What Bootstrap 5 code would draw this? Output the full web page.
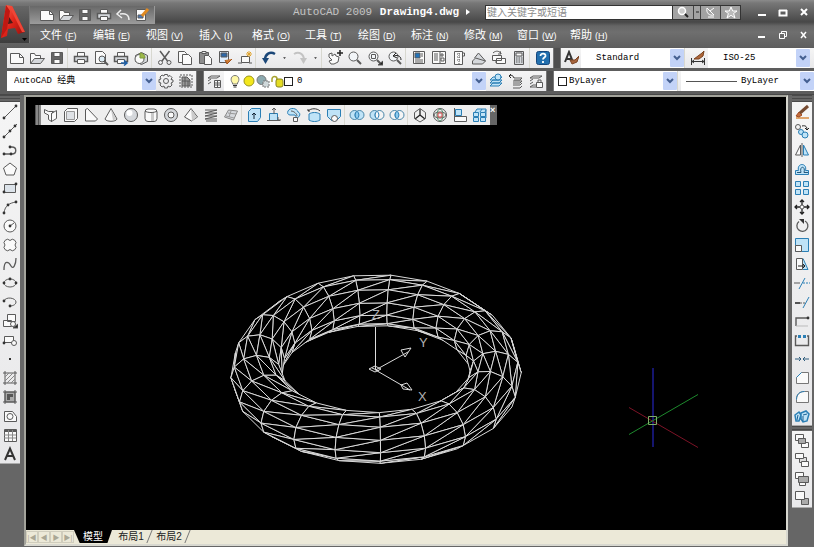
<!DOCTYPE html>
<html lang="zh-CN">
<head>
<meta charset="utf-8">
<meta name="viewport" content="width=device-width, initial-scale=1">
<title>AutoCAD 2009 Drawing4.dwg</title>
<link rel="stylesheet" href="https://cdn.jsdelivr.net/npm/bootstrap@5.3.0/dist/css/bootstrap.min.css">
<style>
  body { background: #666; font-family: "Liberation Sans", "Noto Sans CJK SC", sans-serif; font-size: 11px; line-height: 14px; color: #000; }
  button { border: 0; padding: 0; background: none; color: inherit; }
  svg { display: block; }
  .app-head { background: linear-gradient(#8b8b8b, #777 3px, #484848 22px, #666 26px, #6f6f6f 32px, #5f5f5f); height: 47px; color: #fff; }
  .logo-btn { width: 30px; height: 37px; margin-top: 6px; background: linear-gradient(#666, #3e3e3e); border-right: 1px solid #777; }
  .title-row { height: 24px; }
  .quick-bar { background: linear-gradient(#686868, #9c9c9c); height: 18px; margin-top: 6px; padding: 0 3px 0 7px; border-right: 1px solid #999; }
  .quick-bar .tool { width: 19px; height: 18px; }
  .doc-title { font-family: "Liberation Mono", monospace; font-size: 11px; color: #c4c4c4; width: 192px; margin-left: 138px; }
  .doc-title strong { color: #fff; margin-left: 1px; }
  .search-box { width: 188px; height: 15px; border: 1px solid #333; border-radius: 0; padding: 0 1px; font-size: 10px; line-height: 13px; color: #333; background: #fff; outline: 0; }
  .search-box::placeholder { color: #8c8c8c; opacity: 1; }
  .info-btns { background: #a2a2a2; height: 15px; border: 1px solid #333; border-left: 0; }
  .info-btns button + button { border-left: 1px solid #444; }
  .info-btns svg { margin: 0 auto; }
  .w20 { width: 20px; } .w7 { width: 7px; }
  .win-btns button { width: 21px; height: 16px; }
  .win-btns svg { margin: auto; }
  .menu-row { padding: 3px 0 0 10px; }
  .menu-row a { width: 53px; flex: none; color: #fff; text-decoration: none; font-size: 11px; white-space: nowrap; }
  .menu-row small { font-size: 9px; }
  .tool-row { height: 20px; margin-bottom: 3px; }
  .rows { background: #5d5d5d; padding: 1px 0 0 7px; border-bottom: 1px solid #484848; }
  .strip { background: linear-gradient(#f5f5f5, #e8e8ea); height: 20px; flex: none; }
  .tool { width: 20px; height: 20px; display: flex; align-items: center; justify-content: center; flex: none; }
  .tool svg { width: 16px; height: 16px; fill: none; stroke: #5a5a5a; stroke-width: 1; }
  .tool.dot { width: 11px; }
  .sep { width: 4px; height: 100%; border-left: 1px solid #d8d8d0; flex: none; }
  .float-bar .sep { width: 3px; }
  .combo { appearance: none; border: 0; border-radius: 0; height: 20px; padding: 0 16px 0 7px; font-family: "Liberation Mono", "Noto Sans CJK SC", monospace; font-size: 9px; color: #000; background: #fff url("data:image/svg+xml,%3Csvg xmlns='http://www.w3.org/2000/svg' width='14' height='18'%3E%3Crect width='14' height='18' rx='1' fill='%23c3d3f8'/%3E%3Cpath d='M4 7l3 3 3-3' fill='none' stroke='%23445f91' stroke-width='2'/%3E%3C/svg%3E") no-repeat right 0 center; min-width: 0; }
  .white-box { background: #fff; }
  .gap-dark { width: 8px; background: #4f4f4f; height: 20px; border-left: 1px solid #777; border-right: 1px solid #777; flex: none; }
  .c-work { width: 149px; } .c-layer { width: 193px; padding-left: 4px; } .c-std { width: 103px; padding-left: 15px; } .c-dim { width: 102px; padding-left: 15px; } .c-color { width: 110px; padding-left: 2px; }
  .swatch { width: 9px; height: 9px; border: 1px solid #222; background: #fff; flex: none; }
  .layer-icons svg { width: 14px; height: 14px; fill: none; stroke: #777; }
  .line-sample { width: 51px; height: 1px; background: #555; margin-left: 5px; flex: none; }
  .c-line { padding-left: 4px; }
  .side { width: 20px; flex: none; }
  .side-right { margin-right: 2px; }
  .side .tool { height: 19px; }
  .side .strip { height: auto; border-bottom: 1px solid #aaa; }
  .side-grip { height: 7px; background: repeating-linear-gradient(#4a4a4a 0 1px, #666 1px 3px); }
  .strip + .side-grip { height: 5px; }
  .work-area { min-height: 0; }
  .work-frame { border: 2px solid #a3a39b; border-right-color: #d8d8d0; border-bottom-color: #d8d8d0; margin: 0 4px 1px 4px; min-width: 0; }
  .draw-area { background: #000; position: relative; overflow: hidden; min-height: 0; }
  .draw-area > svg { position: absolute; inset: 0; width: 100%; height: 100%; }
  .float-bar { position: absolute; left: 9px; top: 8px; height: 20px; background: #eee; }
  .float-grip { width: 6px; background: repeating-linear-gradient(90deg, #555 0 1px, #888 1px 3px); }
  .float-close { width: 7px; background: #666; color: #fff; font-size: 9px; font-weight: bold; line-height: 10px; }
  .tab-row { background: #ece9d8; height: 14px; font-size: 10px; }
  .page-btn { width: 12px; height: 12px; margin: 1px 0; border: 1px solid #d0cdbd; color: #aaa795; font-size: 7px; line-height: 9px; }
  .sheet-tab { height: 13px; line-height: 13px; width: 38px; color: #222; position: relative; }
  .sheet-tab::after { content: ""; position: absolute; right: 0; top: 0; height: 13px; border-left: 1px solid #777; transform: skewX(-22deg); }
  .sheet-tab.current { background: #000; color: #fff; clip-path: polygon(0 0, 100% 0, 88% 100%, 15% 100%); }
</style>
</head>
<body>
<div class="d-flex flex-column vh-100 overflow-hidden">
  <header class="app-head d-flex flex-shrink-0">
    <button class="logo-btn flex-shrink-0" aria-label="AutoCAD">
      <svg width="29" height="37" viewBox="0 6 29 37" overflow="visible">
        <defs><linearGradient id="red" x2="1" y2="1"><stop stop-color="#ff6a50"/><stop offset=".5" stop-color="#e0241a"/><stop offset="1" stop-color="#8d0d0b"/></linearGradient></defs>
        <path d="M6 5L12 6 25 32 18 34 15 28 8 29 7 36 1 38Z" fill="url(#red)"/>
        <path d="M9 17L13 23 8 24Z" fill="#4a1a18"/><path d="M6 5L10 11 7 29 1 38Z" fill="#c01812"/><path d="M10 8L12 6 25 32 22 32Z" fill="#ef4637"/>
        <path d="M22 38h5l-2.500 3z" fill="#000"/>
      </svg>
    </button>
    <div class="flex-grow-1">
      <div class="title-row d-flex align-items-center">
        <div class="quick-bar d-flex align-self-start" data-tools="qnew qopen qsave qprint qundo qedit"></div>
        <div class="doc-title text-nowrap">AutoCAD 2009 <strong>Drawing4.dwg</strong> <svg class="d-inline" width="5" height="7"><path d="M0 0l4 3-4 3z" fill="#fff"/></svg></div>
        <input class="search-box" type="text" aria-label="搜索" placeholder="键入关键字或短语">
        <div class="info-btns d-flex">
          <button class="w20" aria-label="搜索"><svg width="14" height="13"><circle cx="6" cy="5" r="3.500" fill="#ccc" stroke="#fff" stroke-width="1.500"/><path d="M9 8l3 3" stroke="#222" stroke-width="2"/></svg></button>
          <button class="w7" aria-label="选项"><svg width="5" height="13"><path d="M1 6h3" stroke="#222"/></svg></button>
          <button class="w20" aria-label="通讯中心"><svg width="14" height="13" fill="none" stroke="#fff"><path d="M3 2l7 7M3 2c-1 5 2 8 7 7M6 5l4-3M4 11h6"/></svg></button>
          <button class="w20" aria-label="收藏夹"><svg width="14" height="13"><path d="M7 1l1.700 4H13L9.600 7.500 11 12 7 9.300 3 12l1.400-4.500L1 5h4.300z" fill="#bbb" stroke="#fff"/></svg></button>
        </div>
        <div class="win-btns d-flex ms-auto">
          <button aria-label="最小化"><svg width="10" height="10"><path d="M1 8h8" stroke="#fff" stroke-width="2"/></svg></button>
          <button aria-label="最大化"><svg width="10" height="10"><path d="M1 3.500h8M1.500 3v5.500h7V3" fill="none" stroke="#fff" stroke-width="2"/></svg></button>
          <button aria-label="关闭"><svg width="10" height="10"><path d="M2 2l6 6M8 2l-6 6" stroke="#fff" stroke-width="2"/></svg></button>
        </div>
      </div>
      <nav class="menu-row d-flex align-items-center" aria-label="菜单">
        <a href="#">文件 <small>(<u>F</u>)</small></a><a href="#">编辑 <small>(<u>E</u>)</small></a><a href="#">视图 <small>(<u>V</u>)</small></a><a href="#">插入 <small>(<u>I</u>)</small></a><a href="#">格式 <small>(<u>O</u>)</small></a><a href="#">工具 <small>(<u>T</u>)</small></a><a href="#">绘图 <small>(<u>D</u>)</small></a><a href="#">标注 <small>(<u>N</u>)</small></a><a href="#">修改 <small>(<u>M</u>)</small></a><a href="#">窗口 <small>(<u>W</u>)</small></a><a href="#">帮助 <small>(<u>H</u>)</small></a>
        <div class="win-btns d-flex ms-auto">
          <button aria-label="最小化文档"><svg width="10" height="10"><path d="M1 7h7" stroke="#fff" stroke-width="2"/></svg></button>
          <button aria-label="还原文档"><svg width="10" height="10"><path d="M1.500 3.500h5v5h-5zM3.500 3V1.500h5v5H7" fill="none" stroke="#fff"/></svg></button>
          <button aria-label="关闭文档"><svg width="10" height="10"><path d="M2 2l5 6M7 2L2 8" stroke="#fff" stroke-width="1.500"/></svg></button>
        </div>
      </nav>
    </div>
  </header>

  <div class="rows">
    <div class="tool-row d-flex overflow-hidden">
      <div class="strip d-flex" data-tools="new open save | print preview publish dwf | cut copy paste match block | undo dot redo dot | pan zoom zoomwin zoomprev | props center palette sheet markup calc | help"></div>
      <div class="gap-dark"></div>
      <div class="strip d-flex flex-grow-1">
        <div class="d-flex" data-tools="textstyle"></div>
        <select class="combo c-std" aria-label="文字样式"><option>Standard</option></select>
        <div class="sep"></div>
        <div class="d-flex" data-tools="dimstyle"></div>
        <select class="combo c-dim" aria-label="标注样式"><option>ISO-25</option></select>
      </div>
    </div>
    <div class="tool-row d-flex overflow-hidden">
      <div class="strip d-flex">
        <select class="combo c-work" aria-label="工作空间"><option>AutoCAD 经典</option></select>
        <div class="d-flex" data-tools="gear wsave"></div>
      </div>
      <div class="gap-dark"></div>
      <div class="strip d-flex">
        <div class="d-flex" data-tools="layers"></div>
        <div class="white-box d-flex align-items-center layer-icons ps-1">
          <svg viewBox="0 0 14 14"><path d="M4.500 9C2 6 3 1.500 7 1.500S12 6 9.500 9v1h-5z" fill="#fff9a8"/><path d="M5 11.500h4M5.500 13h3" stroke="#333"/></svg>
          <svg viewBox="0 0 14 14"><circle cx="7" cy="7" r="5" fill="#f3e71c" stroke="#9a951c"/></svg>
          <svg viewBox="0 0 14 14"><circle cx="5.500" cy="6" r="4.500" fill="#8caab0"/><path d="M7 7h6v6H7z" fill="#cfd8da" stroke-dasharray="2 1"/></svg>
          <svg viewBox="0 0 14 14"><path d="M2 8V5a2.500 2.500 0 015 0v3" stroke="#a7a331" stroke-width="1.500"/><rect x="6" y="5" width="7" height="8" rx="2" fill="#e4dc22" stroke="#888420"/></svg>
          <span class="swatch"></span>
          <select class="combo c-layer" aria-label="图层"><option>0</option></select>
        </div>
        <div class="d-flex" data-tools="laymake layprev laystate"></div>
      </div>
      <div class="gap-dark"></div>
      <div class="strip d-flex flex-grow-1">
        <div class="white-box d-flex align-items-center ps-1"><span class="swatch"></span><select class="combo c-color" aria-label="颜色"><option>ByLayer</option></select></div>
        <div class="sep"></div>
        <div class="white-box d-flex align-items-center flex-grow-1"><span class="line-sample"></span><select class="combo c-line flex-grow-1" aria-label="线型"><option>ByLayer</option></select></div>
      </div>
    </div>
  </div>

  <main class="work-area d-flex flex-grow-1 overflow-hidden">
    <aside class="side">
      <div class="side-grip"></div>
      <div class="strip d-flex flex-column" data-tools="line xline pline polygon rect arc circle cloud spline ellipse earc insert mkblock point hatch gradient region table mtext"></div>
    </aside>
    <section class="work-frame d-flex flex-column flex-grow-1">
      <div class="draw-area flex-grow-1">
        <svg id="model" fill="#000" stroke="#dadada" aria-label="圆环体线框">
          <g id="mesh" stroke-linejoin="bevel"></g>
          <g fill="none" stroke="#ddd">
            <path d="M349.500 273V230M349.500 273L382 255M349.500 273L384 293M343 272l6-3 6 3-6 3zM346 271l7 3M375 253l10-2-6 9-3-5zM375 288l6-2 5 7-9-1z"/>
          </g>
          <g fill="#b0b0b0" stroke="none" font-family="Liberation Sans, sans-serif" font-size="13"><text x="346" y="222">Z</text><text x="393" y="250">Y</text><text x="392" y="304">X</text></g>
          <path d="M627 271v79" stroke="#15156e" stroke-width="2"/>
          <path d="M603 310.500L672 350.500" stroke="#7c1326"/><path d="M603 337.500L672 297.500" stroke="#1d8a2d"/>
          <path d="M622.500 319.500h8v8h-8z" fill="none" stroke="#7fae68"/>
        </svg>
        <div class="float-bar d-flex">
          <div class="float-grip"></div>
          <div class="d-flex" data-tools="polysolid box wedge cone sphere cylinder torus pyramid helix planar | extrude presspull sweep revolve loft | union subtract intersect | move3d rotate3d align3d array3d"></div>
          <button class="float-close d-flex" aria-label="关闭工具栏">×</button>
        </div>
      </div>
      <div class="tab-row d-flex" role="tablist">
        <button class="page-btn" aria-label="第一个">|◀</button><button class="page-btn" aria-label="上一个">◀</button><button class="page-btn" aria-label="下一个">▶</button><button class="page-btn" aria-label="最后一个">▶|</button>
        <button class="sheet-tab current" role="tab">模型</button><button class="sheet-tab" role="tab">布局1</button><button class="sheet-tab" role="tab">布局2</button>
      </div>
    </section>
    <aside class="side side-right">
      <div class="side-grip"></div>
      <div class="strip d-flex flex-column" data-tools="erase copyobj mirror offset array move rotate scale stretch trim extend breakpt break join chamfer fillet explode"></div>
      <div class="side-grip"></div>
      <div class="strip d-flex flex-column" data-tools="order1 order2 order3 order4"></div>
    </aside>
  </main>
</div>

<script src="https://cdn.jsdelivr.net/npm/bootstrap@5.3.0/dist/js/bootstrap.bundle.min.js"></script>
<script>
const B = 'fill="#bfe3f7" stroke="#2b7fb5"', D = 'fill="#333" stroke="none"', W = 'fill="#fafafa"', G = 'fill="#d5d8dc"';
const page = `<path ${W} d="M1.500 3.500h9l4 4v6h-13z"/><path d="M10.500 3.500v4h4"/>`;
const folder = `<path ${W} d="M1.500 13.500v-10h4l1 2h5v3"/><path ${G} d="M1.500 13.500l4-5h10l-4 5z"/>`;
const floppy = `<path fill="#666" d="M2.500 2.500h11v11h-11z"/><path ${W} d="M5 2.500h6v4H5zM5 9.500h6v4H5z"/>`;
const printer = `<path ${W} d="M4.500 6.500v-4h7v4"/><path ${G} stroke-width="1.500" d="M1.500 6.500h13v5h-13z"/><path ${W} d="M4.500 9.500h7v4h-7z"/>`;
const lens = '<circle cx="6.500" cy="6.500" r="4.500" fill="#f2f5f8"/><path d="M10 10l4 4" stroke-width="2"/>';
const sheets = '<path d="M2 5l3-2h9l-3 2zM2 8l3-2M2 11l3-2M2 14l3-2h5l-2 2z"/>';
const rings = (l, m, r) => `<circle cx="5.500" cy="8" r="4.500" fill="${l}" stroke="#4a86a8"/><circle cx="10.500" cy="8" r="4.500" fill="${r}" stroke="#4a86a8"/><path d="M8 4.300a4.500 4.500 0 010 7.400 4.500 4.500 0 010-7.400z" fill="${m}" stroke="#2b7fb5"/>`;
const nodes = (...p) => p.map(([x, y]) => `<circle cx="${x}" cy="${y}" r="1.400" ${D}/>`).join('');
const icons = {
  qnew: page, qopen: folder, qsave: floppy, qprint: printer,
  qundo: '<path d="M14 13c0-5-3-7-9-6M6 3L2 7l5 4" stroke="#eee" stroke-width="1.500"/>',
  qedit: `<path ${W} d="M2.500 2.500h9v11h-9z"/><path d="M4 8h5v3H4z" fill="#4c78b5"/><path d="M8 9l6-7" stroke="#e08a22" stroke-width="3"/>`,
  new: page, open: folder, save: floppy, print: printer,
  preview: `<path ${W} d="M2.500 1.500h7l3 3v9h-10z"/><circle cx="9" cy="9" r="3" fill="#dcecf5"/><path d="M11 11l4 4" stroke-width="2"/>`,
  publish: printer + '<path d="M8 13h5M11 10.500l3 2.500-3 2.500" stroke="#1d5fa8" stroke-width="1.500"/>',
  dwf: `<path ${G} d="M2.500 5.500l6-3 6 3v6l-6 3-6-3z"/><circle cx="6.500" cy="9" r="4.500" ${W}/><path d="M7 8V3a5 5 0 015 5z" fill="#9dba4a" stroke="#7f9a3a"/>`,
  cut: '<path d="M3 1l7.500 10M12.500 1L5 11" stroke-width="1.500"/><circle cx="3.500" cy="12.500" r="2"/><circle cx="12" cy="12.500" r="2"/>',
  copy: `<path ${W} d="M1.500 1.500h6l2 2v9h-8z"/><path ${W} d="M5.500 4.500h6l3 3v7h-9z"/>`,
  paste: `<path fill="#8d8d8d" d="M2.500 2.500h9v11h-9z"/><path fill="#eee" d="M5 1.500h4v2H5z"/><path ${W} d="M7.500 5.500h4l3 3v6h-7z"/>`,
  match: `<path fill="#dfefff" d="M2.500 1.500h9v11h-9z"/><path d="M4 3h6v4H4z" fill="#2d68a8"/><path d="M8 10l2 4 5-5" fill="#cc7a33" stroke="#a2521b"/>`,
  block: `<path ${W} d="M4.500 6.500h8v6h-8z"/><path d="M1 13h4M12 13h3"/><path d="M12 1v6M9 4h6M10 2l4 4M14 2l-4 4" stroke="#e0a42e"/>`,
  undo: '<path d="M14 4C9 1 4 4 4 10" stroke="#1b4778" stroke-width="2.500"/><path d="M1 8l3.500 6L8 8z" fill="#1b4778" stroke="none"/>',
  redo: '<path d="M2 4c5-3 10 0 10 6" stroke="#c3c3c3" stroke-width="2"/><path d="M15 8l-3.500 6L8 8z" fill="#c3c3c3" stroke="none"/>',
  dot: '<path d="M6 7h4l-2 2.500z" fill="#333" stroke="none"/>',
  pan: `<path ${W} d="M2 4l3-1v3l3-2 1 2 3 1-1 5-4 2H4L2 11l3-1-3-3z"/><path d="M13 0v6M10 3h6" stroke="#222" stroke-width="1.500"/>`,
  zoom: lens, zoomwin: lens + '<path d="M4.500 4.500h4v4h-4z"/><path d="M11 15h5v-4z" fill="#222"/>',
  zoomprev: lens + '<path d="M14 10c0-5-5-5-7-4M9 3L6 6l4 2" stroke="#222"/>',
  props: `<path ${W} d="M2.500 1.500h11v12h-11z"/><path d="M4 3h5v5H4z" fill="#2474b9"/><path d="M10 4h2M10 6h2M4 10h8M4 12h8"/>`,
  center: `<path ${W} d="M1.500 1.500h13v12h-13z"/><path d="M3 4h4M3 6h4M3 8h4M3 10h4M9 1v13M10 4h2v2h-2zM10 8h3v3h-3z"/>`,
  palette: `<path ${W} d="M3.500 1.500h8v13h-8zM11.500 3h2v3h-2z"/><path d="M6 4h3M6 7h3M6 10h3M8 14V2" stroke-dasharray="1 1"/>`,
  sheet: `<path ${G} d="M1.500 11l3-3 10 3-3 3h-10zM3.500 8l4-5 7 8"/>`,
  markup: `<path ${W} d="M1.500 5.500h9v5h-9zM5.500 8.500h9v5h-9z"/><path d="M2 3c3-3 7-2 8 1M9 1l1 3-3 0M4 12h1" />`,
  calc: `<path ${G} d="M3.500 1.500h9v13h-9z"/><path ${W} d="M5 3h6v3H5z"/><path d="M5 8h1.500M7.500 8H9M10 8h1.500M5 10h1.500M7.500 10H9M10 10h1.500M5 12h1.500M7.500 12H9M10 12h1.500" stroke-width="1.200"/>`,
  help: '<rect x="1.500" y="1.500" width="13" height="13" rx="2" fill="#226fae" stroke="#16477d"/><path d="M5.500 6c0-3.500 5.500-3 5 0-.300 1.500-2.500 1.500-2.500 3.500M8 11v2" stroke="#fff" stroke-width="1.800"/>',
  textstyle: '<path d="M2 12L6 2l4 10M3.500 9h5" stroke="#333" stroke-width="2"/><path d="M7 10l2 4 5-2 2-6-4 4z" fill="#a7653e" stroke="#7c4525"/>',
  dimstyle: '<path d="M1.500 8v7M14.500 8v7M2 11.500h12M2 11.500l2-1.500M2 11.500L4 13M14 11.500l-2-1.500M14 11.500L12 13" stroke="#333"/><path d="M4 9l8-6 2-2-1 5-4 3z" fill="#b0673a" stroke="#79431f"/>',
  gear: '<path d="M6.500 1.500h3l.5 2 2-1 2 2-1 2 2 .5v2l-2 1 1 2-2 2-2-1-.5 2h-3l-.5-2-2 1-2-2 1-2-2-.5v-3l2-.5-1-2 2-2 2 1z"/><circle cx="8" cy="8" r="2.500"/>',
  wsave: '<path d="M2 2h12v12H2z" stroke-dasharray="2 1"/><path d="M4 4h5l3 3v6H4z" fill="#999"/><path d="M4 8h8M7 4v9M10 8v5"/>',
  layers: sheets.replace('M2 14l3-2h5l-2 2z', '') + `<path ${W} d="M8.500 7.500h6v7h-6z"/><path d="M8 10h7M8 12h7M11.500 8v6"/>`,
  laymake: `<path ${B} d="M2 13l3-3h9l-3 3zM2 10l3-3h9l-3 3zM2 7l3-3h9l-3 3z"/><circle cx="10" cy="4" r="3" ${B}/>`,
  layprev: '<path d="M5 8h9l-2 2H5M5 12h7l2-2M5 15h7l2-2M6 5h8l-2 2H6"/><path d="M6 5C5 2 3 2 1 3M3 1L1 3l2 2" stroke="#222"/>',
  laystate: sheets + `<path ${W} d="M8.500 9.500h6v5h-6z"/><path d="M10 9V7h3v2"/>`,
  line: '<path d="M2 14L14 2"/>' + nodes([2, 14], [14, 2]),
  xline: '<path d="M1 15L15 1"/>' + nodes([2, 14], [8, 8], [13, 3]),
  pline: '<path d="M2 12h8c5 0 5-7 0-7H8" stroke-width="1.400"/>' + nodes([2, 12], [9, 12], [8, 5]),
  polygon: `<path ${W} d="M8 2l6.500 5-2.500 7H4L1.500 7z"/>`,
  rect: '<path fill="#dce3ea" d="M2.500 4.500h11v8h-11z"/>' + nodes([2, 12], [14, 4]),
  arc: '<path d="M2 14C3 6 8 4 14 3"/>' + nodes([2, 14], [6, 6], [14, 3]),
  circle: `<circle cx="8" cy="8" r="6" ${W}/><path d="M8 8l4-3"/>` + nodes([8, 8]),
  cloud: `<path ${W} d="M8 3.500a3 3 0 115 4.500 3 3 0 11-5 4.500 3 3 0 11-5-4.500 3 3 0 115-4.500z"/>`,
  spline: '<path d="M2 14C2 3 7 6 9 10s5-1 5-8" stroke-width="1.300"/>',
  ellipse: '<ellipse cx="8" cy="8" rx="6" ry="4"/>' + nodes([8, 4], [2, 8], [14, 8]),
  earc: '<path d="M2 7c2-5 12-3 12 1 0 3-4 4-6 4"/>' + nodes([2, 7], [8, 12]),
  insert: `<path ${W} d="M5.500 1.500h8v7h-8zM1.500 7.500h8v6h-8z"/><circle cx="11" cy="11" r="2.500" ${W}/><path d="M11 15h5v-4z" fill="#222"/>`,
  mkblock: `<path ${W} d="M2.500 4.500h9v6h-9z"/><circle cx="12" cy="11" r="2.500" ${W}/>` + nodes([2, 11]),
  point: '<path d="M7 7h2v2H7z" fill="#333" stroke="none"/>',
  hatch: '<path d="M1 3h14M1 13h14M3 1v14M13 1v14"/><path d="M3 7l4-4M3 11l8-8M5 13l8-8M9 13l4-4" stroke="#888"/>',
  gradient: '<path d="M3 3h10v10H3z" fill="#aaa"/><path d="M5 5h6v3H8v3H5z" fill="#555" stroke="none"/><path d="M1 3h14M1 13h14M3 1v14M13 1v14"/>',
  region: `<path ${W} d="M2.500 13.500v-10h8l4 5v5z"/><circle cx="8" cy="8.500" r="3"/>`,
  table: `<path ${W} d="M2.500 2.500h12v12h-12z"/><path d="M2 4h12" stroke-width="2"/><path d="M2 8h12M2 11h12M6.500 3v11M10.500 3v11" stroke="#888"/>`,
  mtext: '<path d="M3 14L8 2.500 13 14M5 10h6" stroke="#333" stroke-width="2"/>',
  erase: '<path d="M2 14h13" stroke="#d88c42" stroke-width="1.500"/><path d="M2 12l3-4 3 3-3 2z" fill="#c46b3b" stroke="#9f4a22"/><path d="M6 9l8-7" stroke="#754a30" stroke-width="3"/>',
  copyobj: `<circle cx="4" cy="4" r="2.500"/><circle cx="7" cy="9" r="2.500" ${B}/><circle cx="11" cy="12" r="3" ${B}/><path d="M8 3c4-1 5 1 5 4M11 5l2 2 2-2" stroke="#222"/>`,
  mirror: `<path ${W} d="M6.500 3v10h-5z"/><path ${B} d="M9.500 3v10h5z"/><path d="M8 1v14"/>`,
  offset: `<path ${B} d="M1.500 13.500v-4h3c-2-8 9-8 7 0h3v4z"/><path d="M3 11.500h4c-2-7 5-7 3 0h4" stroke="#25597d"/>`,
  array: `<path ${B} d="M1.500 1.500h5v5h-5zM9.500 1.500h5v5h-5zM1.500 9.500h5v5h-5zM9.500 9.500h5v5h-5z"/>`,
  move: '<path d="M8 1v14M1 8h14M6 3l2-2 2 2M6 13l2 2 2-2M3 6L1 8l2 2M13 6l2 2-2 2" stroke="#222" stroke-width="1.300"/><circle cx="8" cy="8" r="2" fill="#fff"/>',
  rotate: '<path d="M5 3.500a5.500 5.500 0 106-.5" stroke-width="1.300"/><path d="M5 1h5v5z" fill="#333" stroke="none"/>',
  scale: `<path ${B} d="M1.500 1.500h13v13h-13z"/><path ${W} d="M1.500 8.500h6v6h-6z"/>`,
  stretch: `<path ${W} d="M2.500 2.500h6v11h-6z"/><path ${B} d="M9 2.500l5 11H9"/><path d="M4 10h7M9 8l2 2-2 2" stroke="#222"/>`,
  trim: '<path d="M5 14l6-11" stroke="#2b7fb5"/><path d="M0 8h6"/><path d="M9 8h7" stroke-dasharray="2 1" stroke="#2b7fb5"/>',
  extend: '<path d="M9 14l6-11" stroke="#2b7fb5"/><path d="M1 9h5" stroke="#222" stroke-width="1.500"/><path d="M6 9h5" stroke-dasharray="2 1"/>',
  breakpt: '<path d="M2 13V5h12" stroke-width="1.400"/><path d="M2 13h12" stroke="#bbb"/>' + nodes([14, 5]),
  break: '<path d="M3 4H1.500v9.500h13V4H13" stroke-width="1.400"/>' + '<path d="M4 3h3v3H4zM9 3h3v3H9z" fill="#2b7fb5" stroke="none"/>',
  join: '<path d="M1 8h6M15 8H9M5 6l2 2-2 2M11 6L9 8l2 2" stroke="#2f5d7d"/>',
  chamfer: '<path fill="#fafafa" d="M2.500 13.500v-6l5-5h7v11z" stroke="#777"/><path d="M2.500 7.500l5-5" stroke="#2b7fb5"/>',
  fillet: '<path fill="#fafafa" d="M2.500 13.500v-3c0-5 3-8 8-8h4v11z" stroke="#777"/><path d="M2.500 10.500c0-5 3-8 8-8" stroke="#2b7fb5"/>',
  explode: `<path ${B} stroke-width="1.500" d="M1 7l4-3 2 3-2 6H2zM7 5l5-2 3 3-2 7-4 1-2-3z"/><path d="M4 7l-1 5M9 7l4-1M9 8v5" stroke="#1a5f92"/>`,
  order1: `<path ${W} d="M1.500 1.500h8v6h-8zM7.500 9.500h7v5h-7z"/><path fill="#aaa" d="M4.500 5.500h7v5h-7z"/>`,
  order2: `<path fill="#ddd" d="M5.500 5.500h7v5h-7z"/><path ${W} d="M1.500 1.500h8v5h-8zM7.500 9.500h7v5h-7z"/>`,
  order3: `<path ${W} d="M1.500 1.500h8v6h-8zM5.500 10.500h6v4h-6z"/><path fill="#aaa" d="M4.500 5.500h10v6h-10z"/>`,
  order4: `<path fill="#aaa" d="M7.500 8.500h7v6h-7z"/><path ${W} d="M1.500 1.500h9v8h-9z"/>`,
  polysolid: `<path ${W} d="M1.500 2.500l4 2h5l-2 2v8l-3-2V8l-4-2zM8.500 6.500l5-3v8l-5 3z"/>`,
  box: `<path ${W} d="M1.500 4.500l3-3h10v10l-3 3h-10z"/><path fill="#dfe2e6" stroke="#999" d="M3.500 4.500h8v8h-8z"/>`,
  wedge: `<path ${W} d="M2.500 14V2.500l2-1L14.500 12l-2 2z"/>`,
  cone: `<path ${W} d="M8 1.500L14 12c-1 3-11 3-12 0z"/><path d="M8 2l2 11.500 3-1.500z" fill="#ccc" stroke="none"/>`,
  sphere: `<circle cx="8" cy="8" r="6.500" ${G}/><circle cx="6.500" cy="6" r="3" fill="#fff" stroke="none"/>`,
  cylinder: `<rect x="2" y="2" width="12" height="12.500" rx="3" ${W}/><path d="M8 5h3v9H8z" fill="#c9c9c9" stroke="none"/><path d="M2 4c2 2 10 2 12 0"/>`,
  torus: `<circle cx="8" cy="8" r="6.500" ${G}/><circle cx="8" cy="8" r="3" ${W}/>`,
  pyramid: `<path ${W} d="M8 1.500L14.500 10l-6 4-7-4z"/><path d="M8 2l1 12 5-4z" fill="#ccc" stroke="none"/>`,
  helix: '<path d="M2 3h12L2 6h12L2 9h12L2 12h12M3 14h11" stroke="#555"/>',
  planar: `<path ${G} stroke="#888" d="M5.500 3l9 1-4 9-9-3z"/><path d="M5 6l8 1M3 9l8 2M8 4l-2 6" stroke="#999"/>`,
  extrude: `<path ${B} d="M2.500 4.500l3-3h9v9l-3 4h-9z"/><path d="M8 12V6M6 8l2-2 2 2" stroke="#123"/>`,
  presspull: `<path ${B} d="M3.500 6.500h8v7h-8z"/><path d="M8 7V1M6 3l2-2 2 2M1 13.500h13M12 10v3h3"/>`,
  sweep: `<path ${B} d="M2 4c2-4 9-3 10 1 3 1 2 5-1 6l-2-3-5 0c-2 0-3-2-2-4z"/><path d="M5 4c3 0 6 3 6 5"/><path ${W} d="M7.500 10.500h4v4h-4z"/>`,
  revolve: `<path ${B} d="M3 7c3-2 8-2 11 0v6c-3 2-8 2-11 0z"/><path d="M2 4c3-3 9-3 12 0M2 2v2h2" stroke="#333"/>`,
  loft: `<path ${B} d="M1.500 2.500h13v7l-4 4h-5l-4-4z"/><circle cx="8.500" cy="11.500" r="3" ${W}/>`,
  union: rings('#bfe3f7', '#8ecbee', '#bfe3f7'), subtract: rings('#bfe3f7', '#f8f8f8', '#f4f4f4'), intersect: rings('#f4f4f4', '#8ecbee', '#f4f4f4'),
  move3d: '<path d="M8 8V2M8 8l-5 4M8 8l5 4" stroke="#222" stroke-width="1.300"/><path d="M8 1.500l5.500 4v6L8 15l-5.500-3.500v-6z"/>',
  rotate3d: '<circle cx="8" cy="8" r="6.500"/><ellipse cx="8" cy="8" rx="6" ry="3"/><ellipse cx="8" cy="8" rx="3" ry="6" stroke="#4d8a6a"/><path d="M6 6h4v4H6z" stroke="#c44"/>',
  align3d: `<path ${B} d="M3.500 2.500h6v6h-6z"/><path ${W} d="M2.500 9.500h12v5h-12z"/><path d="M2.500 1v13"/>`,
  array3d: `<path ${B} d="M1.500 5.500h5v4h-5zM8.500 5.500h5v4h-5zM1.500 10.500h5v4h-5zM8.500 10.500h5v4h-5zM3 5l2-3h9v9M8 5l2-3M13 5l1-2"/>`
};
document.querySelectorAll('[data-tools]').forEach(bar => {
  bar.innerHTML = bar.dataset.tools.split(' ').map(n => n === '|' ? '<span class="sep"></span>'
    : `<button class="tool${n === 'dot' ? ' dot' : ''}" aria-label="${n}"><svg viewBox="0 0 16 16">${icons[n]}</svg></button>`).join('');
});

// Torus mesh: triangles sorted back to front, black faces hide the edges behind them.
const R = 119.5, r = 25.5, N = 21, M = 12, tilt = 35.26 * Math.PI / 180, start = 1.7 * Math.PI / 180;
const vertex = (i, j) => {
  const a = start + i * 2 * Math.PI / N, b = j * 2 * Math.PI / M, d = R + r * Math.cos(b);
  const x = d * Math.sin(a), y = d * Math.cos(a), z = r * Math.sin(b);
  const s = 1 + 0.05 * y / R;
  return [350 + x * s, 272 + y * Math.sin(tilt) - z * Math.cos(tilt), y * Math.cos(tilt) + z * Math.sin(tilt)];
};
const tris = [];
for (let i = 0; i < N; i++) for (let j = 0; j < M; j++) {
  const p = vertex(i, j), q = vertex(i + 1, j), s = vertex(i + 1, j + 1), t = vertex(i, j + 1);
  tris.push([p, q, s], [p, s, t]);
}
const depth = t => t[0][2] + t[1][2] + t[2][2];
const facing = ([a, b, c]) => (b[0] - a[0]) * (c[1] - a[1]) - (b[1] - a[1]) * (c[0] - a[0]);
document.getElementById('mesh').innerHTML = tris.filter(t => facing(t) < 0).sort((a, b) => depth(a) - depth(b))
  .map(t => `<path d="M${t.map(p => p[0].toFixed(1) + ' ' + p[1].toFixed(1)).join('L')}Z"/>`).join('');
</script>
</body>
</html>
